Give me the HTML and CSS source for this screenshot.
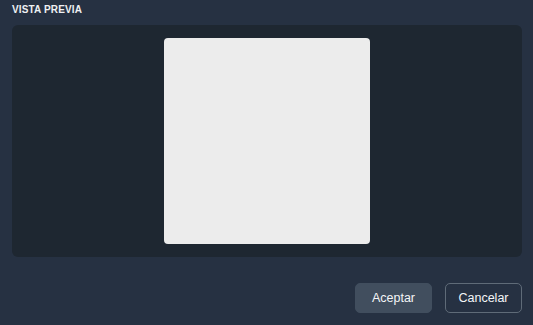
FILE: index.html
```html
<!DOCTYPE html>
<html lang="es">
<head>
<meta charset="utf-8">
<link rel="stylesheet" href="styles.css">
</head>
<body>
<div class="dialog">
  <div class="title">VISTA PREVIA</div>
  <div class="preview">
    <div class="canvas"></div>
  </div>
  <div class="actions">
    <button class="btn btn-primary">Aceptar</button>
    <button class="btn btn-outline">Cancelar</button>
  </div>
</div>
</body>
</html>
```
FILE: styles.css
```css
html, body {
  margin: 0;
  padding: 0;
  background: #263142;
  width: 533px;
  height: 325px;
  overflow: hidden;
  font-family: "Liberation Sans", Arial, sans-serif;
}
.dialog {
  display: flex;
  flex-direction: column;
  padding: 4px 11px 0 12px;
}
.title {
  color: #eef0f2;
  font-size: 10px;
  font-weight: bold;
  line-height: 12px;
  height: 12px;
  letter-spacing: 0.15px;
}
.preview {
  margin-top: 9px;
  height: 232px;
  background: #1e2731;
  border-radius: 6px;
  display: flex;
  justify-content: center;
  align-items: center;
}
.canvas {
  width: 206px;
  height: 206px;
  background: #ececec;
  border-radius: 4px;
}
.actions {
  display: flex;
  justify-content: flex-end;
  gap: 13px;
  margin-top: 26px;
}
.btn {
  width: 77px;
  height: 30px;
  border-radius: 5px;
  font-family: "Liberation Sans", Arial, sans-serif;
  font-size: 12.5px;
  color: #f4f5f7;
  padding: 0;
  cursor: pointer;
}
.btn-primary {
  background: #414e5e;
  border: 1px solid #414e5e;
}
.btn-outline {
  background: transparent;
  border: 1px solid #5f6b78;
}
```
